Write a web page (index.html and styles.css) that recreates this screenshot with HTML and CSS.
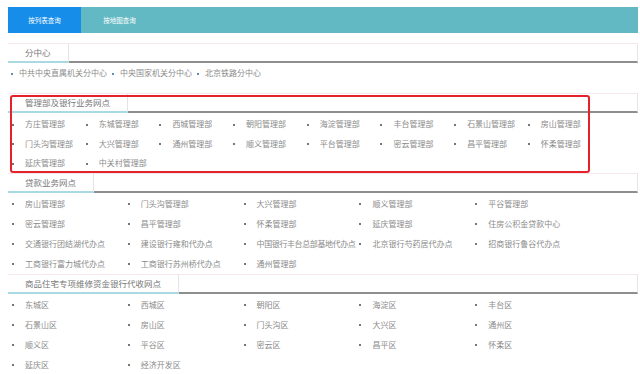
FILE: index.html
```html
<!DOCTYPE html>
<html>
<head>
<meta charset="utf-8">
<title>网点查询</title>
<link rel="stylesheet" href="styles.css">
</head>
<body>
<div id="page">
  <div class="tabbar">
    <div class="tab on">按列表查询</div>
    <div class="tab">按地图查询</div>
  </div>

  <div class="hd"><span class="hd-tab">分中心</span></div>
  <ul class="inline">
    <li>中共中央直属机关分中心</li>
    <li>中央国家机关分中心</li>
    <li>北京铁路分中心</li>
  </ul>

  <div class="block">
    <div class="hd"><span class="hd-tab">管理部及银行业务网点</span></div>
    <ul class="grid c8 tight">
      <li>方庄管理部</li><li>东城管理部</li><li>西城管理部</li><li>朝阳管理部</li>
      <li>海淀管理部</li><li>丰台管理部</li><li>石景山管理部</li><li>房山管理部</li>
      <li>门头沟管理部</li><li>大兴管理部</li><li>通州管理部</li><li>顺义管理部</li>
      <li>平台管理部</li><li>密云管理部</li><li>昌平管理部</li><li>怀柔管理部</li>
      <li>延庆管理部</li><li>中关村管理部</li>
    </ul>
    <div class="mark"></div>
  </div>

  <div class="hd"><span class="hd-tab">贷款业务网点</span></div>
  <ul class="grid c5">
    <li>房山管理部</li><li>门头沟管理部</li><li>大兴管理部</li><li>顺义管理部</li><li>平谷管理部</li>
    <li>密云管理部</li><li>昌平管理部</li><li>怀柔管理部</li><li>延庆管理部</li><li>住房公积金贷款中心</li>
    <li>交通银行团结湖代办点</li><li>建设银行雍和代办点</li><li class="long">中国银行丰台总部基地代办点</li><li>北京银行芍药居代办点</li><li>招商银行鲁谷代办点</li>
    <li>工商银行富力城代办点</li><li>工商银行苏州桥代办点</li><li>通州管理部</li>
  </ul>

  <div class="hd"><span class="hd-tab">商品住宅专项维修资金银行代收网点</span></div>
  <ul class="grid c5 last">
    <li>东城区</li><li>西城区</li><li>朝阳区</li><li>海淀区</li><li>丰台区</li>
    <li>石景山区</li><li>房山区</li><li>门头沟区</li><li>大兴区</li><li>通州区</li>
    <li>顺义区</li><li>平谷区</li><li>密云区</li><li>昌平区</li><li>怀柔区</li>
    <li>延庆区</li><li>经济开发区</li>
  </ul>
</div>
</body>
</html>
```

FILE: styles.css
```css
html, body {
	margin: 0;
	padding: 0;
	background: #fff;
}
body {
	font-family: "Noto Sans CJK SC", "Noto Sans", sans-serif;
	color: #8a8a8a;
}
ul {
	list-style: none;
	margin: 0;
	padding: 0;
}
#page {
	width: 630px;
	margin-left: 8px;
	padding-top: 7px;
}
.tabbar {
	display: flex;
	height: 26px;
	background: #63b9c3;
	margin-bottom: 10px;
}
.tab {
	width: 77px;
	line-height: 26px;
	text-align: center;
	color: #fff;
	font-size: 6.5px;
}
.tab.on {
	width: 73px;
	background: #168de8;
}
.hd {
	display: flex;
	height: 17px;
	border-top: 1px solid #f6e6ee;
	border-right: 1px solid #e6e6e6;
	border-bottom: 2px solid #8e8e8e;
}
.hd-tab {
	padding: 0 17px;
	line-height: 17px;
	font-size: 8.5px;
	color: #777;
	border-right: 1px solid #e4e4e4;
	border-bottom: 2px solid #a9d9e3;
	margin-bottom: -2px;
	background: #fff;
}
.inline {
	display: flex;
	gap: 5px;
	padding-left: 3px;
	line-height: 20px;
	font-size: 8px;
	margin-bottom: 10px;
}
.inline li::before {
	content: "";
	display: inline-block;
	width: 2px;
	height: 2px;
	background: #5b8fc4;
	vertical-align: middle;
	margin-right: 6px;
}
.block {
	position: relative;
}
.grid {
	display: grid;
	font-size: 8px;
	line-height: 20px;
	padding-top: 1px;
}
.grid.c8 {
	grid-template-columns: repeat(8, 73.7px);
}
.grid.c5 {
	grid-template-columns: repeat(5, 115.8px);
}
.grid.tight {
	line-height: 19.5px;
}
.grid li {
	white-space: nowrap;
}
.grid li.long {
	letter-spacing: -0.4px;
}
.grid li::before {
	content: "";
	display: inline-block;
	width: 2px;
	height: 2px;
	background: #777;
	vertical-align: middle;
	margin-left: 4px;
	margin-right: 11px;
}
.mark {
	position: absolute;
	left: 2px;
	top: 2px;
	width: 576px;
	height: 74px;
	border: 2px solid #e3222a;
	border-radius: 3px;
}
```
